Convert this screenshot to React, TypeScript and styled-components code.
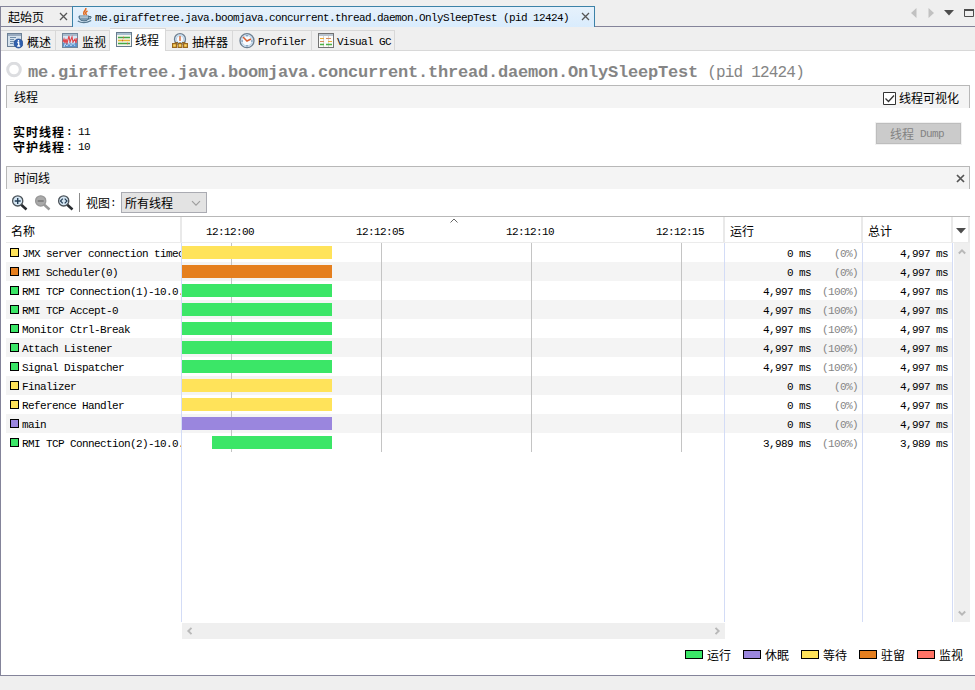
import React from 'react';
import styled, { createGlobalStyle, css } from 'styled-components';

const latin = css`
  font-family: 'Liberation Mono', monospace;
  font-size: 11px;
  letter-spacing: -0.6px;
`;

const GlobalStyle = createGlobalStyle`
  *, *::before, *::after { box-sizing: border-box; }
  body {
    margin: 0;
    background: #efefef;
    color: #000;
    font: 12px/16px 'Noto Sans CJK SC', sans-serif;
  }
  svg { display: block; flex: none; }
`;

const colors = {
  running: '#3be667',
  sleeping: '#9a86de',
  wait: '#ffe35a',
  park: '#e57f1f',
  monitor: '#ff7366',
};
type State = keyof typeof colors;

const Window = styled.div`
  width: 975px;
  height: 690px;
  overflow: hidden;
  background: #efefef;
  white-space: pre;
`;

const Latin = styled.span`
  ${latin}
  line-height: 14px;
`;

/* Document tabs */
const DocumentBar = styled.div`
  display: flex;
  height: 27px;
  padding-top: 6px;
  background: linear-gradient(#84849a, #84849a) 0 26px / 100% 1px no-repeat;
`;

const DocumentTab = styled.div<{ $active?: boolean; $width: number }>`
  display: flex;
  align-items: center;
  width: ${(p) => p.$width}px;
  height: ${(p) => (p.$active ? 21 : 20)}px;
  padding: ${(p) => (p.$active ? '0 4px 2px 4px' : '0 4px 0 7px')};
  border: solid ${(p) => (p.$active ? '#3c82a8' : '#84849a')};
  border-width: ${(p) => (p.$active ? '1px 1px 0 1px' : '1px 0 0 1px')};
  background: ${(p) => (p.$active ? 'linear-gradient(#e6f1fb, #d9ecfd)' : '#efefef')};
`;

const DocumentName = styled.span`
  flex: 1;
`;

const DocumentPath = styled(Latin)`
  flex: 1;
  padding: 3px 0 0 2px;
`;

const WindowControls = styled.div`
  display: flex;
  gap: 9px;
  margin-left: auto;
  padding: 1px 1px 0 0;
`;

/* View tabs */
const Client = styled.div`
  height: 649px;
  border: solid #84849a;
  border-width: 0 0 1px 1px;
  background: #fff;
`;

const ViewBar = styled.div`
  display: flex;
  align-items: flex-end;
  height: 24px;
  background: linear-gradient(#d8d8d8, #d8d8d8) 0 23px / 100% 1px no-repeat, #efefef;
`;

const ViewTab = styled.div<{ $active?: boolean; $width: number }>`
  display: flex;
  align-items: center;
  gap: ${(p) => (p.$active ? 3 : 4)}px;
  width: ${(p) => p.$width}px;
  height: ${(p) => (p.$active ? 23 : 21)}px;
  padding-left: 6px;
  border: solid #d8d8d8;
  border-width: 1px 1px 0 0;
  ${(p) => (p.$active ? 'background: #fff; padding-bottom: 2px;' : 'border-bottom-width: 1px;')}
`;

const ViewName = styled.span`
  padding-top: 2px;
`;

const ViewLatin = styled(Latin)`
  padding-top: 3px;
  margin-left: -1px;
`;

const Page = styled.div`
  padding: 0 5px;
`;

const Title = styled.div`
  display: flex;
  align-items: flex-start;
  height: 34px;
  padding-top: 11px;
  color: #858585;
`;

const TitleName = styled.span`
  margin: 1px 0 0 6px;
  font: bold 17px/20px 'Liberation Mono', monospace;
  letter-spacing: -0.2px;
`;

const TitlePid = styled.span`
  margin: 1px 0 0 9px;
  font: 16px/20px 'Liberation Mono', monospace;
  letter-spacing: -0.8px;
`;

const Section = styled.div`
  display: flex;
  align-items: center;
  justify-content: space-between;
  width: 964px;
  height: 23px;
  padding: 0 4px 0 7px;
  border: solid #b8b8b8;
  border-width: 1px 1px 0 1px;
  background: #f4f4f4;
`;

const CheckLabel = styled.label`
  display: flex;
  align-items: center;
  gap: 3px;
  padding: 2px 6px 0 0;
`;

const Summary = styled.div`
  display: flex;
  justify-content: space-between;
  height: 58px;
  padding: 14px 3px 0 7px;
`;

const Stats = styled.div`
  padding-top: 2px;
`;

const Stat = styled.div`
  display: flex;
  height: 15px;
  align-items: center;
  line-height: 15px;
`;

const StatName = styled.b`
  letter-spacing: 1px;
`;

const StatColon = styled(Latin)`
  width: 13px;
  padding-left: 1px;
  font-weight: bold;
`;

const DumpButton = styled.button`
  display: flex;
  align-items: center;
  gap: 6px;
  width: 87px;
  height: 23px;
  margin-right: 5px;
  padding: 0 0 0 14px;
  border: 1px solid #b9b9b9;
  background: #cbcbcb;
  color: #838383;
  outline: 1px solid #f1f1f1;
  outline-offset: -1px;
  box-shadow: inset 0 0 0 1px #bdbdbd;
  font: inherit;
`;

const Toolbar = styled.div`
  display: flex;
  align-items: center;
  height: 27px;
  padding-left: 5px;
`;

const ToolIcons = styled.div`
  display: flex;
  gap: 5px;
`;

const Divider = styled.i`
  width: 1px;
  height: 19px;
  margin: 0 6px 0 4px;
  background: #8b8b8b;
`;

const Select = styled.div`
  display: flex;
  align-items: center;
  justify-content: space-between;
  width: 86px;
  height: 21px;
  margin: 0 0 0 5px;
  padding: 0 5px 0 3px;
  border: 1px solid #aaabb2;
  background: #e3e3e3;
`;

/* Thread table */
const Table = styled.div`
  width: 964px;
  border-top: 1px solid #b8b8b8;
`;

const columns = css`
  display: grid;
  grid-template-columns: 176px 543px 138px 90px;
`;

const HeadRow = styled.div`
  display: grid;
  grid-template-columns: 176px 543px 138px 90px 17px;
  height: 26px;
  border-bottom: 1px solid #ebebeb;
`;

const HeadCell = styled.div`
  display: flex;
  align-items: center;
  padding: 3px 0 0 5px;
  border-right: 2px solid #e9e9e9;
`;

const TimeHead = styled(HeadCell)`
  position: relative;
  padding: 5px 0 0 24px;
`;

const SortMark = styled.span`
  position: absolute;
  left: 268px;
  top: 1px;
`;

const TimeLabel = styled(Latin)`
  flex: none;
  width: 150px;
`;

const MenuCell = styled(HeadCell)`
  padding: 2px 0 0 3px;
`;

const Body = styled.div`
  display: flex;
  gap: 1px;
  height: 380px;
`;

const Rows = styled.div`
  display: flex;
  flex-direction: column;
  width: 947px;
  height: 379px;
`;

const Row = styled.div`
  ${columns}
  height: 19px;
  &:nth-child(even) { background: #f4f4f4; }
`;

const Filler = styled.div`
  ${columns}
  flex: 1;
`;

const Cell = styled.div`
  display: flex;
  min-width: 0;
  overflow: hidden;
  border-right: 1px solid #d3dcf6;
`;

const NameCell = styled(Cell)`
  gap: 3px;
  padding: 4px 0 0 4px;
`;

const Track = styled(Cell)`
  padding-top: 3px;
  background: linear-gradient(to right, #c4c4c4 1px, transparent 1px) 49px 0 / 150px 100%;
`;

const Bar = styled.div<{ $state: State; $start: number }>`
  width: ${(p) => 150 - p.$start}px;
  height: 13px;
  margin-left: ${(p) => p.$start}px;
  background: ${(p) => colors[p.$state]};
`;

const ValueCell = styled(Cell)`
  justify-content: flex-end;
  padding: 4px 4px 0 0;
`;

const Percent = styled(Latin)`
  width: 47px;
  color: #858585;
  text-align: right;
`;

const Swatch = styled.i<{ $state: State; $wide?: boolean }>`
  flex: none;
  width: ${(p) => (p.$wide ? 18 : 9)}px;
  height: 9px;
  margin-top: ${(p) => (p.$wide ? -1 : 1)}px;
  border: 1px solid #000;
  background: ${(p) => colors[p.$state]};
`;

const ScrollV = styled.div`
  display: flex;
  flex-direction: column;
  justify-content: space-between;
  width: 16px;
  height: 379px;
  padding: 5px 4px;
  background: #efefef;
`;

const ScrollH = styled.div`
  display: flex;
  justify-content: space-between;
  width: 543px;
  height: 16px;
  margin-left: 176px;
  padding: 4px;
  background: #efefef;
`;

const Legend = styled.div`
  display: flex;
  justify-content: flex-end;
  gap: 12px;
  padding: 8px 7px 0 0;
`;

const LegendItem = styled.div`
  display: flex;
  align-items: center;
  gap: 4px;
  width: 46px;
`;

/* Icons */
const Cross = ({ bold }: { bold?: boolean }) => (
  <svg width="9" height="9" viewBox="0 0 9 9">
    <path d="M1 1l7 7M8 1L1 8" stroke="#555" strokeWidth={bold ? 1.7 : 1.3} />
  </svg>
);

const Arrow = ({ dir, color = '#b8b8b8', thin }: { dir: number; color?: string; thin?: boolean }) => (
  <svg width={thin ? 10 : 8} height={thin ? 10 : 8} viewBox="0 0 8 8">
    <path d="M.8 5.500L4 2.300l3.200 3.200" transform={`rotate(${dir} 4 4)`} fill="none" stroke={color} strokeWidth={thin ? 0.9 : 1.9} />
  </svg>
);

const JavaIcon = () => (
  <svg width="16" height="16" viewBox="0 0 16 16">
    <path d="M8.500 0c2 2-4 3.500-1 7M10.500 3c-2 1-2.500 2-.8 4" fill="none" stroke="#e2681c" strokeWidth="1.500" />
    <path d="M2 8h10v2q-1 3-5 3t-5-3z" fill="#7f9cb2" stroke="#3b607a" strokeWidth=".8" />
    <path d="M12 8.500q3-.5 2 1.500-1 1-3 1" fill="none" stroke="#44677f" />
    <path d="M3 9h8" stroke="#d9e6ee" />
    <path d="M.8 13q6 3.500 13.400-.5" fill="none" stroke="#567890" strokeWidth="1.400" />
  </svg>
);

const Frame = ({ fill = '#eef3f7' }: { fill?: string }) => (
  <>
    <rect x=".5" y=".5" width="15" height="14" fill={fill} stroke="#71869c" />
    <path d="M1 2h14" stroke="#a9bccd" strokeWidth="2" />
  </>
);

const OverviewIcon = () => (
  <svg width="16" height="16" viewBox="0 0 16 16">
    <rect x=".5" y=".5" width="14" height="13" fill="#d5e1ec" stroke="#6c8096" />
    <path d="M1 2h13" stroke="#99abc0" strokeWidth="2" />
    <path d="M3 4.500h6M3 6.500h4M3 8.500h5M3 10.500h3" stroke="#718daa" />
    <circle cx="11.500" cy="10.500" r="4.500" fill="#2f5fae" stroke="#254a8d" strokeWidth=".7" />
    <path d="M11.500 7v1.500M10.300 9.500h1.400v3.200M10.200 13h3" stroke="#fff" strokeWidth="1.300" fill="none" />
  </svg>
);

const MonitorIcon = () => (
  <svg width="16" height="16" viewBox="0 0 16 16">
    <Frame fill="#d8e8f7" />
    <path d="M1 14v-4l1-1 1 2 2-2 1 2 2-2 1 2 2-2 1 2 2-2 1 1v4z" fill="#5b91cb" />
    <path d="M1 9l1-3 1 4 1-4 1 4 2-7 1 6 2-5 1 5 2-3 1 4 1-5" fill="none" stroke="#e24348" strokeWidth="1.100" />
    <path d="M2 14l1-3 2 2 2-3 2 3 2-3 2 3" fill="none" stroke="#b6d5f0" />
  </svg>
);

const ThreadsIcon = () => (
  <svg width="16" height="15" viewBox="0 0 16 15">
    <rect x=".5" y=".5" width="15" height="14" fill="#f6f6ef" stroke="#687c8e" />
    <path d="M1 2h14" stroke="#a8c0d0" strokeWidth="2" />
    <path d="M2 5.500h12M2 11.500h12" stroke="#43a843" strokeWidth="1.500" />
    <path d="M2 8.500h12" stroke="#e8b632" strokeWidth="1.500" />
    <path d="M7 5.500h1M6 8.500h1M11 11.500h1" stroke="#d4583c" strokeWidth="1.500" />
  </svg>
);

const Clock = ({ r = 7 }: { r?: number }) => (
  <>
    <circle cx="8" cy={r + 0.7} r={r} fill="#dceaf7" stroke="#6d7f91" strokeWidth="1.300" />
    <circle cx="8" cy={r + 0.7} r={r - 1.8} fill="#f8fbfe" stroke="#a8c6e1" strokeWidth=".8" />
  </>
);

const SamplerIcon = () => (
  <svg width="16" height="16" viewBox="0 0 16 16">
    <Clock r={5.5} />
    <path d="M8 3v5" stroke="#d66735" strokeWidth="1.400" />
    <path d="M3 11V9.500h3M10 9.500h3V11M8 9v2" stroke="#8c672e" fill="none" />
    <path d="M.6 10.600h3.800v3.800H.6zM6.100 10.600h3.800v3.800H6.100zM11.600 10.600h3.800v3.800h-3.800z" fill="#ffd65e" stroke="#99661d" strokeWidth="1.200" />
  </svg>
);

const ProfilerIcon = () => (
  <svg width="16" height="16" viewBox="0 0 16 16">
    <Clock />
    <path d="M4 4l4 4 4-2" stroke="#d85e31" strokeWidth="1.500" fill="none" />
    <path d="M8 2v1.500M8 12v1.500M2.500 8H4M12 8h1.500" stroke="#567b9e" />
  </svg>
);

const GcIcon = () => (
  <svg width="16" height="15" viewBox="0 0 16 15">
    <rect x=".5" y=".5" width="15" height="14" fill="#fbfbf8" stroke="#737373" />
    <path d="M1 2h14" stroke="#b9c4ce" strokeWidth="2" />
    <path d="M5.500 3v11M10.500 3v11" stroke="#d5d5d5" />
    <path d="M2 5.500h4M10 8.500h4" stroke="#edaa32" />
    <path d="M2 8.500h4M8 5.500h5" stroke="#d88b60" />
    <path d="M2 11.500h4M8 11.500h6" stroke="#4bb246" strokeWidth="1.400" />
  </svg>
);

const ZoomIcon = ({ kind, disabled }: { kind: 'in' | 'out' | 'fit'; disabled?: boolean }) => (
  <svg width="18" height="16" viewBox="0 0 18 16">
    <path d="M10 9.500l5.500 5" stroke={disabled ? '#999' : '#292c30'} strokeWidth="2.500" />
    <circle cx="6.700" cy="5.900" r="5.100" fill={disabled ? '#aaa' : '#d6e7f4'} stroke={disabled ? '#989898' : '#4b5258'} strokeWidth="1.300" />
    {kind === 'in' && <path d="M3.700 6h6M6.700 3v6" stroke="#253e55" strokeWidth="1.400" />}
    {kind === 'out' && <path d="M3.700 6h6" stroke="#777" strokeWidth="1.500" />}
    {kind === 'fit' && <path d="M5.800 3.700L3.500 6l2.300 2.300M7.700 3.700L10 6 7.700 8.300" fill="none" stroke="#253e55" strokeWidth="1.200" />}
  </svg>
);

type Thread = { name: string; state: State; start?: number; run: string; percent: string; total?: string };
const full = { state: 'running' as State, run: '4,997 ms', percent: '(100%)' };
const idle = { run: '0 ms', percent: '(0%)' };
const threads: Thread[] = [
  { name: 'JMX server connection timeout', state: 'wait', ...idle },
  { name: 'RMI Scheduler(0)', state: 'park', ...idle },
  { name: 'RMI TCP Connection(1)-10.0.', ...full },
  { name: 'RMI TCP Accept-0', ...full },
  { name: 'Monitor Ctrl-Break', ...full },
  { name: 'Attach Listener', ...full },
  { name: 'Signal Dispatcher', ...full },
  { name: 'Finalizer', state: 'wait', ...idle },
  { name: 'Reference Handler', state: 'wait', ...idle },
  { name: 'main', state: 'sleeping', ...idle },
  { name: 'RMI TCP Connection(2)-10.0.', state: 'running', start: 30, run: '3,989 ms', percent: '(100%)', total: '3,989 ms' },
];

const legend: [string, State][] = [
  ['运行', 'running'],
  ['休眠', 'sleeping'],
  ['等待', 'wait'],
  ['驻留', 'park'],
  ['监视', 'monitor'],
];

export default function App() {
  return (
    <Window>
      <GlobalStyle />
      <DocumentBar>
        <DocumentTab $width={72}>
          <DocumentName>起始页</DocumentName>
          <Cross />
        </DocumentTab>
        <DocumentTab $width={523} $active>
          <JavaIcon />
          <DocumentPath>me.giraffetree.java.boomjava.concurrent.thread.daemon.OnlySleepTest (pid 12424)</DocumentPath>
          <Cross />
        </DocumentTab>
        <WindowControls>
          <svg width="8" height="12"><path d="M6.500 1v10L1 6z" fill="#c1c1c1" /></svg>
          <svg width="8" height="12"><path d="M1.500 1v10L7 6z" fill="#c1c1c1" /></svg>
          <svg width="10" height="12"><path d="M0 3h10L5 8.500z" fill="#4d4d4d" /></svg>
          <svg width="11" height="12"><path d="M1.500 3h9v6.500h-9z" fill="none" stroke="#4d4d4d" /><path d="M1 3h10" stroke="#4d4d4d" strokeWidth="2" /></svg>
        </WindowControls>
      </DocumentBar>
      <Client>
        <ViewBar>
          <ViewTab $width={55}><OverviewIcon /><ViewName>概述</ViewName></ViewTab>
          <ViewTab $width={54}><MonitorIcon /><ViewName>监视</ViewName></ViewTab>
          <ViewTab $width={56} $active><ThreadsIcon /><ViewName>线程</ViewName></ViewTab>
          <ViewTab $width={67}><SamplerIcon /><ViewName>抽样器</ViewName></ViewTab>
          <ViewTab $width={79}><ProfilerIcon /><ViewLatin>Profiler</ViewLatin></ViewTab>
          <ViewTab $width={83}><GcIcon /><ViewLatin>Visual GC</ViewLatin></ViewTab>
        </ViewBar>
        <Page>
          <Title>
            <svg width="16" height="16"><circle cx="8" cy="7.500" r="6.300" fill="none" stroke="#dcdde0" strokeWidth="3" /></svg>
            <TitleName>me.giraffetree.java.boomjava.concurrent.thread.daemon.OnlySleepTest</TitleName>
            <TitlePid>(pid 12424)</TitlePid>
          </Title>
          <Section>
            线程
            <CheckLabel>
              <svg width="13" height="13"><path d="M.5.500h12v12H.5z" fill="#fff" stroke="#333" /><path d="M2.500 6.500l3 3 5.500-6" fill="none" stroke="#333" strokeWidth="1.300" /></svg>
              线程可视化
            </CheckLabel>
          </Section>
          <Summary>
            <Stats>
              <Stat><StatName>实时线程</StatName><StatColon>:</StatColon><Latin>11</Latin></Stat>
              <Stat><StatName>守护线程</StatName><StatColon>:</StatColon><Latin>10</Latin></Stat>
            </Stats>
            <DumpButton disabled>线程<Latin>Dump</Latin></DumpButton>
          </Summary>
          <Section>
            时间线
            <Cross bold />
          </Section>
          <Toolbar>
            <ToolIcons>
              <ZoomIcon kind="in" />
              <ZoomIcon kind="out" disabled />
              <ZoomIcon kind="fit" />
            </ToolIcons>
            <Divider />
            视图<Latin>:</Latin>
            <Select>
              所有线程
              <Arrow dir={180} color="#9d9d9d" thin />
            </Select>
          </Toolbar>
          <Table>
            <HeadRow>
              <HeadCell>名称</HeadCell>
              <TimeHead>
                <TimeLabel>12:12:00</TimeLabel>
                <TimeLabel>12:12:05</TimeLabel>
                <TimeLabel>12:12:10</TimeLabel>
                <TimeLabel>12:12:15</TimeLabel>
                <SortMark>
                  <svg width="8" height="5"><path d="M.5 4.500L4 1l3.500 3.500" fill="none" stroke="#666" /></svg>
                </SortMark>
              </TimeHead>
              <HeadCell>运行</HeadCell>
              <HeadCell>总计</HeadCell>
              <MenuCell>
                <svg width="10" height="6"><path d="M0 0h10L5 5.500z" fill="#4d4d4d" /></svg>
              </MenuCell>
            </HeadRow>
            <Body>
              <Rows>
                {threads.map((t) => (
                  <Row key={t.name}>
                    <NameCell><Swatch $state={t.state} /><Latin>{t.name}</Latin></NameCell>
                    <Track><Bar $state={t.state} $start={t.start ?? 0} /></Track>
                    <ValueCell><Latin>{t.run}</Latin><Percent>{t.percent}</Percent></ValueCell>
                    <ValueCell><Latin>{t.total ?? '4,997 ms'}</Latin></ValueCell>
                  </Row>
                ))}
                <Filler><Cell /><Cell /><Cell /><Cell /></Filler>
              </Rows>
              <ScrollV><Arrow dir={0} /><Arrow dir={180} /></ScrollV>
            </Body>
            <ScrollH><Arrow dir={270} /><Arrow dir={90} /></ScrollH>
            <Legend>
              {legend.map(([label, state]) => (
                <LegendItem key={state}><Swatch $state={state} $wide />{label}</LegendItem>
              ))}
            </Legend>
          </Table>
        </Page>
      </Client>
    </Window>
  );
}
